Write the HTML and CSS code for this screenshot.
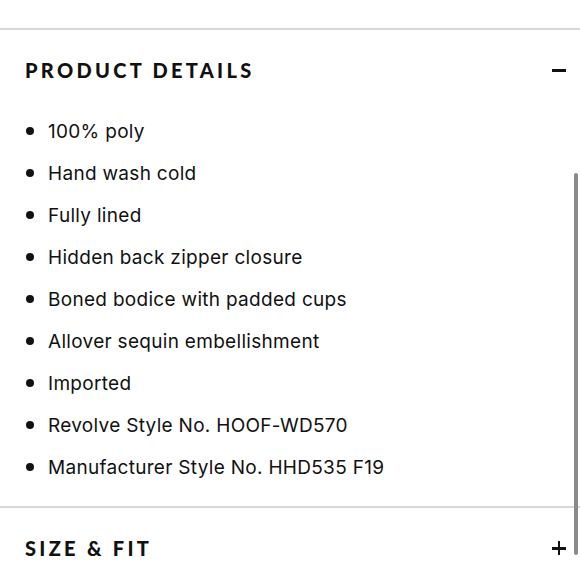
FILE: index.html
```html
<!DOCTYPE html>
<html>
<head>
<meta charset="utf-8">
<link rel="stylesheet" href="styles.css">
</head>
<body>
<div class="page">
  <section class="panel open">
    <div class="panel-head">
      <h2 class="panel-title">PRODUCT DETAILS</h2>
      <span class="toggle minus"></span>
    </div>
    <ul class="details">
      <li>100% poly</li>
      <li>Hand wash cold</li>
      <li>Fully lined</li>
      <li>Hidden back zipper closure</li>
      <li>Boned bodice with padded cups</li>
      <li>Allover sequin embellishment</li>
      <li>Imported</li>
      <li>Revolve Style No. HOOF-WD570</li>
      <li>Manufacturer Style No. HHD535 F19</li>
    </ul>
  </section>
  <section class="panel">
    <div class="panel-head">
      <h2 class="panel-title">SIZE &amp; FIT</h2>
      <span class="toggle plus"></span>
    </div>
  </section>
  <div class="scrollbar"></div>
</div>
</body>
</html>
```

FILE: styles.css
```css
html, body {
  margin: 0;
  padding: 0;
  background: #fff;
}
.page {
  position: relative;
  width: 580px;
  height: 580px;
  overflow: hidden;
  padding-top: 28px;
  box-sizing: border-box;
  font-family: "Inter", "Noto Sans", sans-serif;
  color: #111;
}
.panel {
  border-top: 2px solid #d6d6d6;
}
.panel.open {
  padding-bottom: 18px;
}
.panel-head {
  height: 80px;
  display: flex;
  align-items: center;
  justify-content: space-between;
  padding: 0 14px 0 25px;
}
.panel-title {
  margin: 0;
  font-family: "Lato", "Liberation Sans", sans-serif;
  font-weight: 900;
  font-size: 20px;
  letter-spacing: 3.3px;
  color: #111;
}
.toggle {
  position: relative;
  width: 14px;
  height: 14px;
}
.toggle::before {
  content: "";
  position: absolute;
  left: 0;
  top: 6px;
  width: 14px;
  height: 2.5px;
  background: #111;
}
.toggle.plus::after {
  content: "";
  position: absolute;
  left: 5.75px;
  top: 0;
  width: 2.5px;
  height: 14px;
  background: #111;
}
.details {
  list-style: none;
  margin: 0;
  padding: 0 0 0 26px;
}
.details li {
  display: flex;
  align-items: center;
  gap: 14px;
  height: 42px;
  font-size: 19px;
  letter-spacing: 0.3px;
  color: #111;
}
.details li::before {
  content: "";
  width: 8px;
  height: 8px;
  border-radius: 50%;
  background: #111;
  flex: none;
}
.scrollbar {
  position: absolute;
  right: 2px;
  top: 173px;
  width: 4px;
  height: 382px;
  border-radius: 2px;
  background: #8a8a8a;
}
```
